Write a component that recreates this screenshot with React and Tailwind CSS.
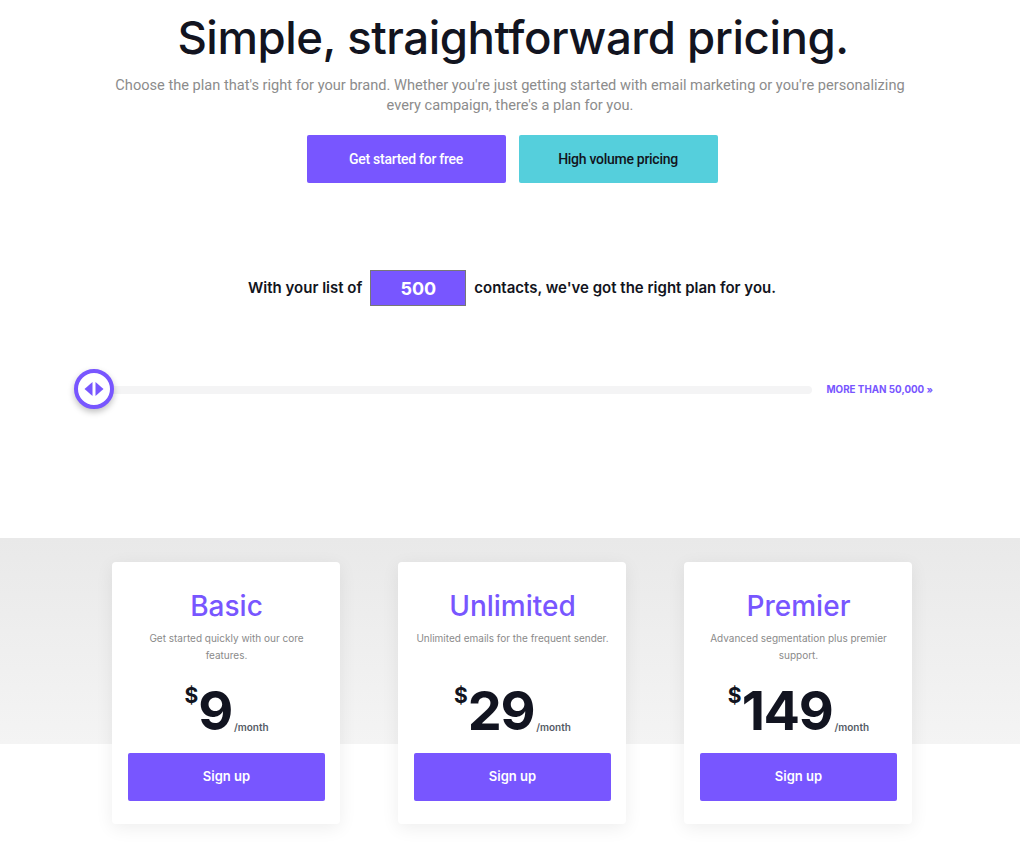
import React from "react";

const plans = [
  {
    name: "Basic",
    desc: ["Get started quickly with our core", "features."],
    price: "9",
  },
  {
    name: "Unlimited",
    desc: ["Unlimited emails for the frequent sender."],
    price: "29",
  },
  {
    name: "Premier",
    desc: ["Advanced segmentation plus premier", "support."],
    price: "149",
  },
];

function Handle() {
  return (
    <div className="relative z-10 h-[40px] w-[40px] shrink-0 rounded-full border-[4px] border-[#7856ff] bg-white shadow-[0_3px_6px_rgba(0,0,0,0.25)] flex items-center justify-center">
      <svg width="22" height="16" viewBox="0 0 22 16">
        <polygon points="9.5,1 9.5,15 1.5,8" fill="#7856ff" />
        <polygon points="12.5,1 12.5,15 20.5,8" fill="#7856ff" />
      </svg>
    </div>
  );
}

function PlanCard({ plan }) {
  return (
    <div className="w-[228px] rounded-[4px] bg-white pl-[16px] pr-[15px] pt-[26px] pb-[23px] text-center shadow-[0_4px_18px_rgba(0,0,0,0.07)]">
      <h2 className="text-[28px] leading-[36px] font-medium text-[#7856ff]">
        {plan.name}
      </h2>
      <p className="mt-[6px] h-[34px] text-[10px] leading-[17px] text-[#8a8a8a]">
        {plan.desc.map((line) => (
          <span key={line} className="block whitespace-nowrap">
            {line}
          </span>
        ))}
      </p>
      <div className="mt-[16px] flex h-[62px] items-end justify-center">
        <span className="self-start mt-[5px] text-[21px] leading-none font-bold text-[#121420]">
          $
        </span>
        <span className="text-[54px] leading-[62px] font-bold tracking-tight text-[#121420]">
          {plan.price}
        </span>
        <span className="mb-[10px] ml-[2px] text-[10px] leading-none font-semibold text-[#555b66]">
          /month
        </span>
      </div>
      <button className="mt-[11px] h-[48px] w-full rounded-[2px] bg-[#7856ff] text-[13px] font-semibold text-white">
        Sign up
      </button>
    </div>
  );
}

export default function App() {
  return (
    <main className="min-h-[857px] w-full bg-white font-['Inter',sans-serif] text-[#121420]">
      <section className="pt-[10px] text-center">
        <h1 className="pl-[6px] text-[45.6px] leading-[56px] font-medium tracking-[-0.01em]">
          Simple, straightforward pricing.
        </h1>
        <p className="mx-auto mt-[9px] max-w-[820px] font-['Roboto',sans-serif] text-[14.6px] leading-[20px] text-[#8c8c8c]">
          Choose the plan that's right for your brand. Whether you're just
          getting started with email marketing or you're personalizing every
          campaign, there's a plan for you.
        </p>
        <div className="mt-[20px] flex justify-center gap-[13px] pl-[4px] font-['Roboto',sans-serif]">
          <button className="h-[48px] w-[199px] rounded-[2px] bg-[#7856ff] text-[14px] font-medium tracking-[-0.02em] text-white">
            Get started for free
          </button>
          <button className="h-[48px] w-[199px] rounded-[2px] bg-[#55cfdc] text-[14px] font-medium tracking-[-0.02em] text-[#121420]">
            High volume pricing
          </button>
        </div>
      </section>

      <section className="mt-[87px] flex items-center justify-center gap-[8px] pl-[4px] text-[15px] font-semibold">
        <span>With your list of</span>
        <div className="flex h-[36px] w-[96px] items-center justify-center border border-[#777] bg-[#7856ff] text-[18px] font-bold text-white">
          500
        </div>
        <span>contacts, we've got the right plan for you.</span>
      </section>

      <section className="mt-[63px] flex items-center pl-[74px] pr-[87px]">
        <Handle />
        <div className="-ml-[20px] mt-[2px] h-[8px] flex-1 rounded-full bg-[#f4f4f5]" />
        <span className="ml-[14px] mt-[3px] text-[9.8px] font-bold text-[#7856ff]">
          MORE THAN 50,000 »
        </span>
      </section>

      <section className="mt-[129px] bg-[linear-gradient(to_bottom,#e9e9e9_0px,#f4f4f4_206px,#ffffff_206px)] pt-[24px] pb-[33px]">
        <div className="flex justify-center gap-[58px] pl-[4px]">
          {plans.map((p) => (
            <PlanCard key={p.name} plan={p} />
          ))}
        </div>
      </section>
    </main>
  );
}
